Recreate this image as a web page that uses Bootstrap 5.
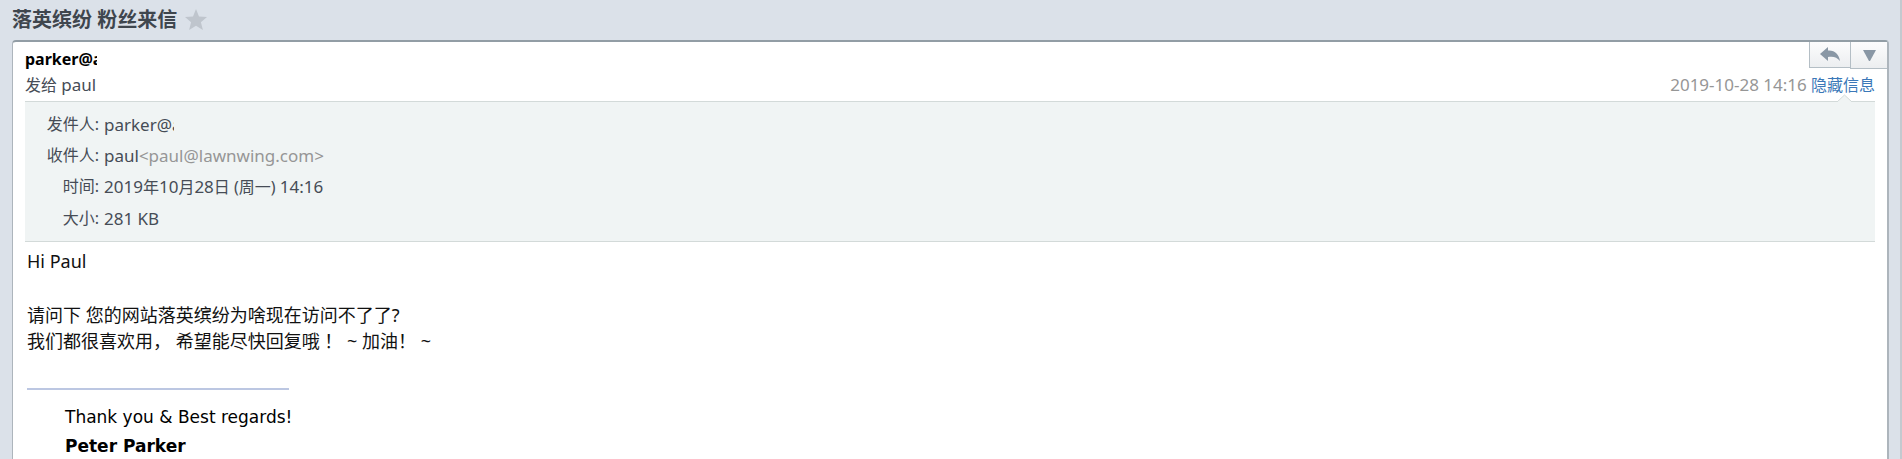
<!DOCTYPE html>
<html lang="zh-CN">
<head>
<meta charset="utf-8">
<meta name="viewport" content="width=device-width, initial-scale=1">
<title>落英缤纷 粉丝来信</title>
<link href="https://cdn.jsdelivr.net/npm/bootstrap@5.3.0/dist/css/bootstrap.min.css" rel="stylesheet">
<style>
html { background: #dbe1e9; }
body {
  background: #dbe1e9; color: #464c56;
  font-family: "Noto Sans", "Noto Sans CJK SC", sans-serif;
  font-size: 16px; line-height: 26px;
  border-right: 2px solid #c3c9cf;
  padding: 0 11px 0 12px;
  overflow: hidden;
}
.subject { font-size: 20px; line-height: 40px; color: #3f464e; font-weight: 700; }
.star { border: 0; padding: 0; background: none; display: flex; }
.mail { border: 1px solid #adb5bc; border-right-width: 2px; border-top: 2px solid #929da5; border-bottom: 0; border-radius: 4px 4px 0 0; color: inherit; }
.mail-head, .mail-info { margin: 0 12px; }
.mail-from { padding-top: 4px; }
.tools { margin-right: -12px; }
.tool { height: 26px; padding: 0; border: 1px solid #b4bec5; border-top: 0; border-right: 0; background: linear-gradient(#fcfcfd, #eceef0); display: flex; align-items: center; justify-content: center; }
.tool-reply { width: 41px; }
.tool-more { width: 37px; height: 27px; }
.sender { width: 72px; color: #000; }
.latin { font-size: 17px; }
.stamp { color: #969696; }
.toggle { color: #3b78b8; text-decoration: none; }
.mail-info { background: #f0f4f4; border-top: 1px solid #d3dad9; border-bottom: 1px solid #d3dad9; padding: 7px 12px; line-height: 31px; position: relative; margin-top: 3px; }
.notch { position: absolute; right: 23px; top: -8px; }
.info-label { width: 62px; margin-right: 5px; text-align: right; font-weight: 400; }
.from { width: 70px; }
.mail-text { padding: 6px 15px 0 14px; color: #111; font-size: 18px; line-height: 26px; }
.greeting { margin-bottom: 28px; }
.sign { width: 262px; height: 2px; background: #bcc7e2; opacity: 1; border: 0; margin: 34px 0 0; }
.sign-text { font-family: "DejaVu Sans", sans-serif; font-size: 17px; line-height: 29px; padding: 13px 38px 20px; color: #000; }
</style>
<script src="https://cdn.jsdelivr.net/npm/bootstrap@5.3.0/dist/js/bootstrap.bundle.min.js"></script>
</head>
<body class="min-vh-100">
<header class="d-flex align-items-center gap-2">
  <h1 class="subject mb-0">落英缤纷 粉丝来信</h1>
  <button class="star" type="button" aria-label="星标">
    <svg width="22" height="22" viewBox="0 0 22 22"><path fill="#bfc5cd" d="M11 0l3 7.400 8 .6-6.100 5.200L17.900 21 11 16.800 4.100 21l2-7.800L0 8l8-.6z"/></svg>
  </button>
</header>
<main class="card mail">
  <div class="mail-head d-flex justify-content-between">
    <div class="mail-from">
      <div class="sender fw-bold overflow-hidden text-nowrap">parker@a</div>
      <div>发给 <span class="latin">paul</span></div>
    </div>
    <div class="d-flex flex-column justify-content-between align-items-end">
      <div class="tools d-flex">
        <button class="tool tool-reply" type="button" aria-label="回复">
          <svg width="20" height="15" viewBox="0 0 20 15"><path fill="#8997a5" d="M0 7L8 0v3.500c7-.5 11 4 12 10.500-3-4-7-5-12-4v4z"/></svg>
        </button>
        <button class="tool tool-more" type="button" aria-label="更多">
          <svg width="13" height="11" viewBox="0 0 13 11"><path fill="#8997a5" d="M0 0h13L7 11H6z"/></svg>
        </button>
      </div>
      <div><time class="stamp latin" datetime="2019-10-28T14:16">2019-10-28 14:16</time> <a class="toggle" href="#info">隐藏信息</a></div>
    </div>
  </div>
  <section class="mail-info" id="info">
    <svg class="notch" width="15" height="8" viewBox="0 0 15 8"><path fill="#f0f4f4" stroke="#d3dad9" d="M0 8L7.500 1 15 8"/></svg>
    <dl class="mb-0">
      <div class="d-flex"><dt class="info-label">发件人:</dt><dd class="from latin mb-0 overflow-hidden text-nowrap">parker@a</dd></div>
      <div class="d-flex"><dt class="info-label">收件人:</dt><dd class="latin mb-0">paul<span class="stamp">&lt;paul@lawnwing.com&gt;</span></dd></div>
      <div class="d-flex"><dt class="info-label">时间:</dt><dd class="mb-0"><span class="latin">2019</span>年<span class="latin">10</span>月<span class="latin">28</span>日 (周一) <span class="latin">14:16</span></dd></div>
      <div class="d-flex"><dt class="info-label">大小:</dt><dd class="latin mb-0">281 KB</dd></div>
    </dl>
  </section>
  <article class="mail-text">
    <p class="greeting">Hi Paul</p>
    <p class="mb-0">请问下 您的网站落英缤纷为啥现在访问不了了?<br>我们都很喜欢用， 希望能尽快回复哦 ！ ~ 加油！ ~</p>
    <hr class="sign">
    <div class="sign-text">Thank you &amp; Best regards!<br><strong>Peter Parker</strong></div>
  </article>
</main>
</body>
</html>
